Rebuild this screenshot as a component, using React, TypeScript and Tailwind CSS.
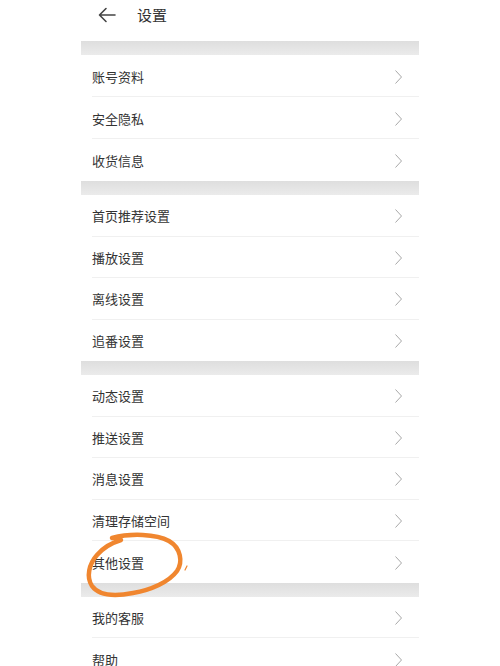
import React from 'react';

const GROUPS: string[][] = [
  ['账号资料', '安全隐私', '收货信息'],
  ['首页推荐设置', '播放设置', '离线设置', '追番设置'],
  ['动态设置', '推送设置', '消息设置', '清理存储空间', '其他设置'],
  ['我的客服', '帮助'],
];

function Chevron() {
  return (
    <svg width="9" height="16" viewBox="0 0 9 16" fill="none">
      <polyline points="1.5,1.5 7.5,8 1.5,14.5" stroke="#a8a8a8" strokeWidth="1" fill="none" />
    </svg>
  );
}

function Row({ label, last, tall, circled }: { label: string; last: boolean; tall: boolean; circled?: boolean }) {
  return (
    <div className={`relative pl-[11px] ${tall ? 'h-[42px]' : 'h-[41.5px]'}`}>
      <div className={`h-full flex items-center justify-between pr-[16px] pt-[2px] ${last ? '' : 'border-b border-[#f0f0f0]'}`}>
        <span className="text-[13px] leading-[18px] text-[#333]">{label}</span>
        <Chevron />
      </div>
      {circled && (
        // hand-drawn marker circle over the row
        <svg
          className="absolute left-0 top-[-13px] pointer-events-none"
          width="110"
          height="75"
          viewBox="0 0 110 75"
          fill="none"
        >
          <path
            d="M31 10 C50 5 75 6 88 13 C100 20 102 34 96 43 C88 54 70 62 52 65 C36 68 18 68 11 58 C5 49 8 36 16 27 C22 20 30 15 40 12"
            stroke="#f0862f"
            strokeWidth="4.5"
            strokeLinecap="round"
            fill="none"
          />
          <path d="M104 42 L106 38" stroke="#f0862f" strokeWidth="1.2" strokeLinecap="round" />
        </svg>
      )}
    </div>
  );
}

export default function App() {
  return (
    <div
      className="w-[500px] h-[666px] overflow-hidden bg-white"
      style={{ fontFamily: '"Noto Sans", "Noto Sans CJK SC", sans-serif' }}
    >
      <div className="mx-auto w-[338px]">
        {/* Header */}
        <div className="h-[41px] flex items-start pt-[4px]">
          <svg className="ml-[17px] mt-[3px]" width="18" height="16" viewBox="0 0 18 16" fill="none">
            <path d="M17 8 H2 M8 1.5 L1.5 8 L8 14.5" stroke="#444" strokeWidth="1.6" strokeLinecap="round" strokeLinejoin="round" />
          </svg>
          <span className="ml-[21px] text-[15px] text-[#333] leading-[22px]">设置</span>
        </div>

        {GROUPS.map((group, gi) => (
          <div key={gi}>
            <div className="h-[14px] bg-gradient-to-b from-[#dedede] to-[#ebebeb]" />
            {group.map((label, i) => (
              <Row
                key={label}
                label={label}
                last={i === group.length - 1}
                tall={gi === 0}
                circled={label === '其他设置'}
              />
            ))}
          </div>
        ))}
      </div>
    </div>
  );
}
